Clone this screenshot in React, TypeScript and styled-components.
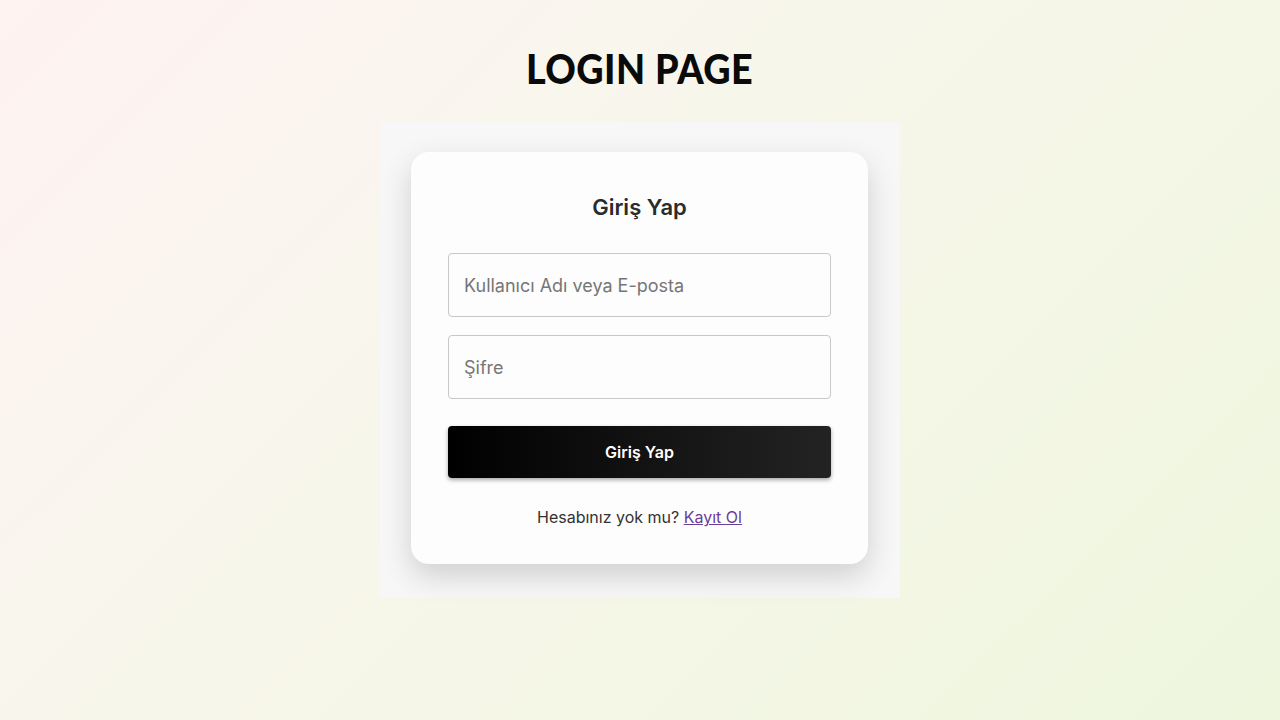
import React from "react";
import styled, { createGlobalStyle } from "styled-components";

const GlobalStyle = createGlobalStyle`
  html, body { margin: 0; padding: 0; }
  body {
    width: 1280px;
    height: 720px;
    overflow: hidden;
    font-family: Inter, "Noto Sans", sans-serif;
    background: linear-gradient(135deg, #fff2f2 0%, #f9f6ee 30%, #f6f6e8 55%, #eef6de 100%);
  }
`;

const Page = styled.main`
  height: 720px;
  display: flex;
  flex-direction: column;
  align-items: center;
  padding-top: 41px;
  box-sizing: border-box;
`;

const Heading = styled.h1`
  margin: 0 0 25px;
  height: 56px;
  line-height: 56px;
  font-family: "Lato", "Noto Sans", sans-serif;
  font-weight: 900;
  font-size: 41px;
  letter-spacing: 0.5px;
  color: #0a0a0a;
  transform: scaleX(0.92);
`;

const Panel = styled.section`
  width: 520px;
  height: 476px;
  box-sizing: border-box;
  padding: 30px 32px 34px 31px;
  background: #f7f7f7;
`;

const Card = styled.div`
  width: 457px;
  height: 412px;
  box-sizing: border-box;
  padding: 40px 37px 37px;
  background: #fdfdfd;
  border-radius: 18px;
  box-shadow: 0 12px 30px rgba(0, 0, 0, 0.16);
  display: flex;
  flex-direction: column;
`;

const CardTitle = styled.h2`
  margin: 0 0 31px;
  height: 30px;
  line-height: 30px;
  text-align: center;
  font-size: 22px;
  font-weight: 600;
  color: #2b2b2b;
`;

const Field = styled.input<{ $gap: number }>`
  height: 64px;
  box-sizing: border-box;
  width: 100%;
  margin: 0 0 ${(p) => p.$gap}px;
  padding: 0 15px;
  border: 1px solid #c8c8c8;
  border-radius: 4px;
  background: #fdfdfd;
  font-family: Inter, sans-serif;
  font-size: 18px;
  color: #333;
  outline: none;
  &::placeholder { color: #767676; }
`;

const SubmitButton = styled.button`
  height: 52px;
  width: 100%;
  border: none;
  border-radius: 4px;
  background: linear-gradient(90deg, #000 0%, #121212 50%, #232323 100%);
  box-shadow: 0 2px 4px rgba(0, 0, 0, 0.35);
  color: #fff;
  font-family: Inter, sans-serif;
  font-size: 16px;
  font-weight: 600;
  margin-bottom: 29px;
  cursor: pointer;
`;

const Footer = styled.p`
  margin: 0;
  height: 20px;
  line-height: 20px;
  text-align: center;
  font-size: 16px;
  color: #333;
`;

const Link = styled.a`
  color: #6a3d9a;
  text-decoration: underline;
`;

export default function App() {
  return (
    <>
      <GlobalStyle />
      <Page>
        <Heading>LOGIN PAGE</Heading>
        <Panel>
          <Card>
            <CardTitle>Giriş Yap</CardTitle>
            <Field $gap={18} placeholder="Kullanıcı Adı veya E-posta" />
            <Field $gap={27} type="password" placeholder="Şifre" />
            <SubmitButton>Giriş Yap</SubmitButton>
            <Footer>
              Hesabınız yok mu? <Link href="#">Kayıt Ol</Link>
            </Footer>
          </Card>
        </Panel>
      </Page>
    </>
  );
}
